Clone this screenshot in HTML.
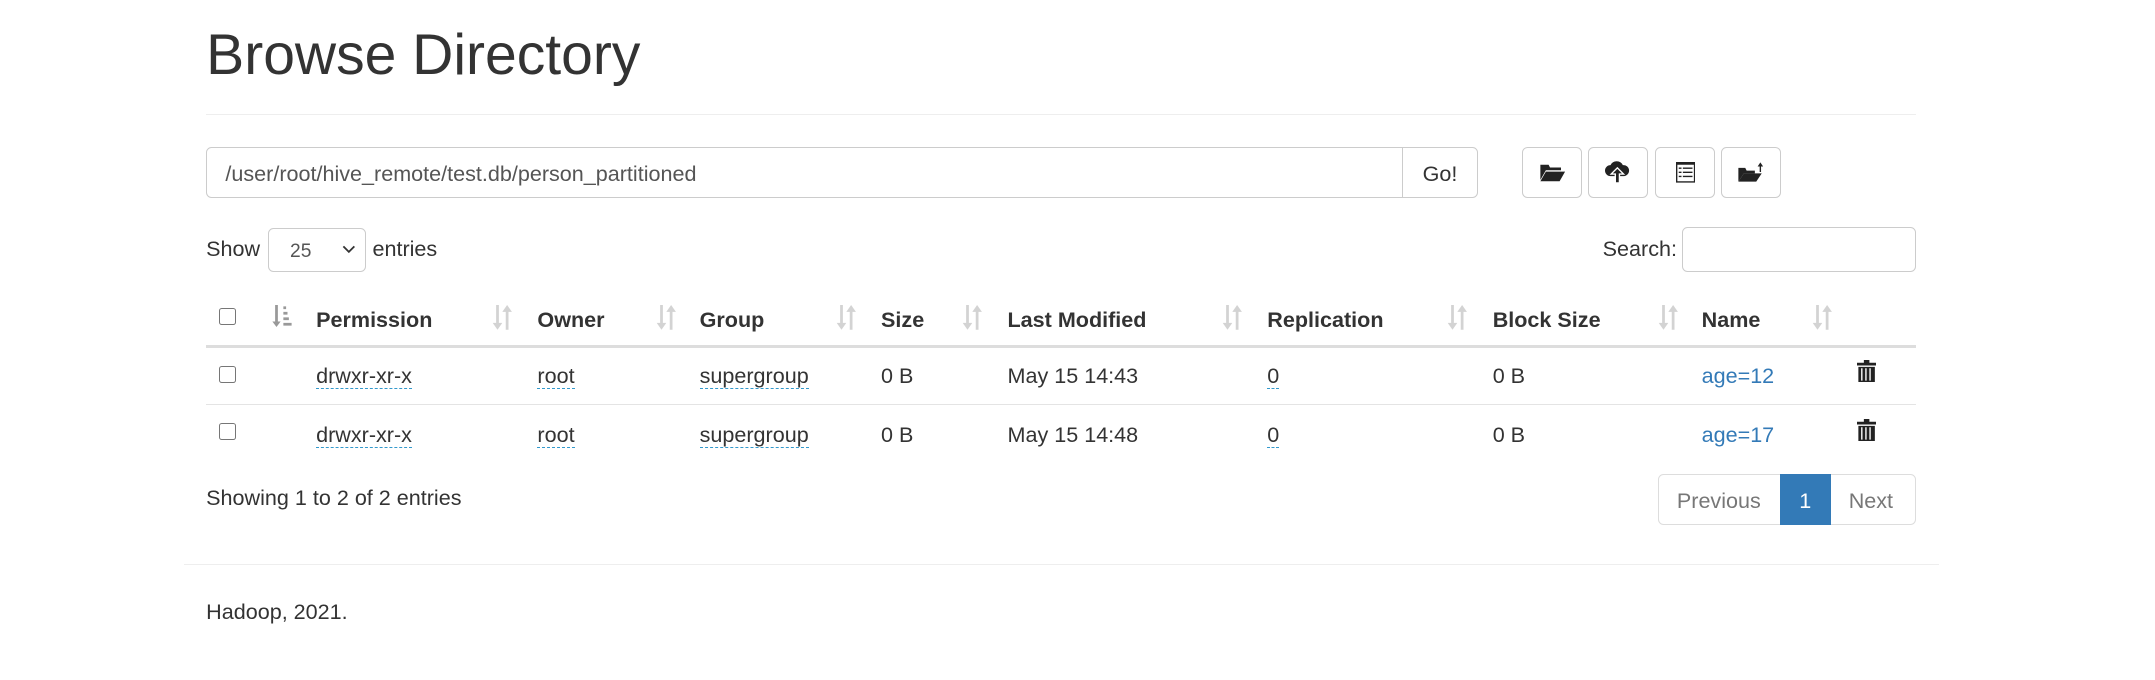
<!DOCTYPE html>
<html><head><meta charset="utf-8"><style>
html,body{margin:0;padding:0;background:#fff;}
body{width:2155px;height:680px;overflow:hidden;}
#w{zoom:1.3745;position:relative;width:1570px;height:495px;font-family:"Liberation Sans",sans-serif;font-size:15.7px;color:#333;}
.a{position:absolute;white-space:nowrap;}
.h{font-weight:bold;}
.btn{position:absolute;border:1px solid #ccc;border-radius:4px;box-sizing:border-box;height:37px;top:107px;width:44px;background:#fff;display:flex;align-items:center;justify-content:center;}
.cb{position:absolute;width:11px;height:11px;border:1px solid #767676;border-radius:2px;}
.u{border-bottom:1px dashed #3399cc;}
.lnk{color:#337ab7;}
</style></head><body><div id="w">
<svg width="0" height="0" style="position:absolute"><defs><g id="s"><path d="M3 0h2v13h2.5L4 18 0.5 13H3z" fill="#d3d3d3"/><path d="M10 18h2V5h2.5L11 0 7.5 5H10z" fill="#d3d3d3"/></g></defs></svg>
<div class="a" style="left:150px;top:16px;font-size:41.5px;">Browse Directory</div>
<div class="a" style="left:150px;top:83px;width:1244px;height:1px;background:#eee"></div>

<div class="a" style="left:150px;top:107px;width:925px;height:37px;border:1px solid #ccc;border-radius:4px;box-sizing:border-box;"></div>
<div class="a" style="left:1020px;top:107px;width:1px;height:37px;background:#ccc"></div>
<div class="a" style="left:164px;top:117px;color:#555">/user/root/hive_remote/test.db/person_partitioned</div>
<div class="a" style="left:1035px;top:117px;">Go!</div>

<div class="btn" style="left:1107px"><svg width="19" height="15" viewBox="0 0 19 15"><path d="M1 2h6l1 2h8v2H5L1 13z" fill="#222"/><path d="M5 7h14l-4 7H1z" fill="#222"/></svg></div>
<div class="btn" style="left:1155px"><svg width="18" height="17" viewBox="0 0 18 17"><path d="M4 11a4 4 0 0 1 0-8 5 5 0 0 1 9 0 4 4 0 0 1 1 8z" fill="#222"/><path d="M9 5l-4.5 4.5h3V16h3V9.5h3z" fill="#222" stroke="#fff" stroke-width="1"/></svg></div>
<div class="btn" style="left:1204px"><svg width="14" height="15" viewBox="0 0 14 15"><rect x="0.5" y="0.5" width="13" height="14" fill="none" stroke="#222"/><rect x="0" y="0" width="14" height="2" fill="#222"/><path d="M2 4h2v1H2zM5 4h7v1H5zM2 7h2v1H2zM5 7h7v1H5zM2 10h2v1H2zM5 10h7v1H5z" fill="#222"/></svg></div>
<div class="btn" style="left:1252px"><svg width="21" height="17" viewBox="0 0 21 17"><path d="M1 5h5l1 2h6v2H5L1 15z" fill="#222"/><path d="M5 9h13l-4 6H1z" fill="#222"/><path d="M17 1l-2 3h1.5v4h1V4H19z" fill="#222"/></svg></div>

<div class="a" style="left:150px;top:172px;">Show</div>
<div class="a" style="left:195px;top:166px;width:71px;height:32px;border:1px solid #ccc;border-radius:4px;box-sizing:border-box;"></div>
<div class="a" style="left:211px;top:175px;font-size:14px;color:#555">25</div>
<svg class="a" style="left:249px;top:178px" width="10" height="7" viewBox="0 0 10 7"><path d="M1 1l4 4 4-4" stroke="#333" stroke-width="1.3" fill="none"/></svg>
<div class="a" style="left:271px;top:172px;">entries</div>
<div class="a" style="left:1166px;top:172px;">Search:</div>
<div class="a" style="left:1224px;top:165px;width:170px;height:33px;border:1px solid #ccc;border-radius:4px;box-sizing:border-box;"></div>

<div class="cb" style="left:159px;top:224px"></div>
<svg class="a" style="left:197px;top:222px" width="16" height="16" viewBox="0 0 16 16"><path d="M3 0v12H1l3 4 3-4H5V0z" fill="#999"/><path d="M9 1h2v2H9zM9 5h3v2H9zM9 9h4v2H9zM9 13h6v2H9z" fill="#999"/></svg>
<div class="a h" style="left:230px;top:223px">Permission</div><svg class="a" style="left:358px;top:222px" width="15" height="18"><use href="#s"/></svg>
<div class="a h" style="left:391px;top:223px">Owner</div><svg class="a" style="left:477px;top:222px" width="15" height="18"><use href="#s"/></svg>
<div class="a h" style="left:509px;top:223px">Group</div><svg class="a" style="left:608px;top:222px" width="15" height="18"><use href="#s"/></svg>
<div class="a h" style="left:641px;top:223px">Size</div><svg class="a" style="left:700px;top:222px" width="15" height="18"><use href="#s"/></svg>
<div class="a h" style="left:733px;top:223px">Last Modified</div><svg class="a" style="left:889px;top:222px" width="15" height="18"><use href="#s"/></svg>
<div class="a h" style="left:922px;top:223px">Replication</div><svg class="a" style="left:1053px;top:222px" width="15" height="18"><use href="#s"/></svg>
<div class="a h" style="left:1086px;top:223px">Block Size</div><svg class="a" style="left:1206px;top:222px" width="15" height="18"><use href="#s"/></svg>
<div class="a h" style="left:1238px;top:223px">Name</div><svg class="a" style="left:1318px;top:222px" width="15" height="18"><use href="#s"/></svg>
<div class="a" style="left:150px;top:251px;width:1244px;height:2px;background:#ddd"></div>

<div class="cb" style="left:159px;top:266px"></div>
<div class="a" style="left:230px;top:264px"><span class="u">drwxr-xr-x</span></div>
<div class="a" style="left:391px;top:264px"><span class="u">root</span></div>
<div class="a" style="left:509px;top:264px"><span class="u">supergroup</span></div>
<div class="a" style="left:641px;top:264px">0 B</div>
<div class="a" style="left:733px;top:264px">May 15 14:43</div>
<div class="a" style="left:922px;top:264px"><span class="u">0</span></div>
<div class="a" style="left:1086px;top:264px">0 B</div>
<div class="a lnk" style="left:1238px;top:264px">age=12</div>
<svg class="a" style="left:1351px;top:262px" width="14" height="16" viewBox="0 0 14 16"><path d="M5 0h4v2h5v2H0V2h5z" fill="#222"/><path d="M1 5h12v11H1z" fill="#222"/><path d="M3 6h1v9H3zM6 6h1v9H6zM9 6h1v9H9z" fill="#fff"/></svg>
<div class="a" style="left:150px;top:294px;width:1244px;height:1px;background:#e4e4e4"></div>

<div class="cb" style="left:159px;top:308px"></div>
<div class="a" style="left:230px;top:307px"><span class="u">drwxr-xr-x</span></div>
<div class="a" style="left:391px;top:307px"><span class="u">root</span></div>
<div class="a" style="left:509px;top:307px"><span class="u">supergroup</span></div>
<div class="a" style="left:641px;top:307px">0 B</div>
<div class="a" style="left:733px;top:307px">May 15 14:48</div>
<div class="a" style="left:922px;top:307px"><span class="u">0</span></div>
<div class="a" style="left:1086px;top:307px">0 B</div>
<div class="a lnk" style="left:1238px;top:307px">age=17</div>
<svg class="a" style="left:1351px;top:305px" width="14" height="16" viewBox="0 0 14 16"><path d="M5 0h4v2h5v2H0V2h5z" fill="#222"/><path d="M1 5h12v11H1z" fill="#222"/><path d="M3 6h1v9H3zM6 6h1v9H6zM9 6h1v9H9z" fill="#fff"/></svg>

<div class="a" style="left:150px;top:353px">Showing 1 to 2 of 2 entries</div>
<div class="a" style="left:1206px;top:345px;width:188px;height:37px;border:1px solid #ddd;border-radius:4px;box-sizing:border-box;"></div>
<div class="a" style="left:1295px;top:345px;width:37px;height:37px;background:#337ab7"></div>
<div class="a" style="left:1220px;top:355px;color:#777">Previous</div>
<div class="a" style="left:1309px;top:355px;color:#fff">1</div>
<div class="a" style="left:1345px;top:355px;color:#777">Next</div>

<div class="a" style="left:134px;top:410px;width:1277px;height:1px;background:#eee"></div>
<div class="a" style="left:150px;top:436px">Hadoop, 2021.</div>
</div></body></html>
